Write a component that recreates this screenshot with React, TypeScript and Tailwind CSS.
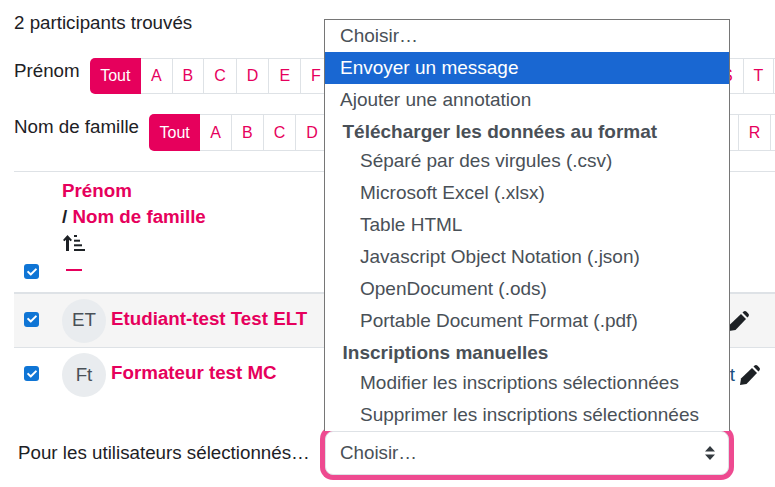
import { FaCheck } from "react-icons/fa";

const firstNameLetters = "ABCDEFGHIJKLMNOPQRST".split("");
const lastNameLetters = "ABCDEFGHIJKLMNOPQR".split("");

function Pager({ label, letters, height }: { label: string; letters: string[]; height: string }) {
  return (
    <div className="flex items-start whitespace-nowrap">
      <span className="mr-[10px] leading-[26px]">{label}</span>
      <div className={"flex items-stretch text-[16px] " + height}>
        <span className="flex items-center rounded-l-[5px] bg-[#e6005c] px-[10.5px] text-white">Tout</span>
        {letters.map((l) => (
          <span
            key={l}
            className="flex shrink-0 items-center border-y border-r border-[#dee2e6] px-[10px] text-[#e6005c]"
          >
            {l}
          </span>
        ))}
        <span className="w-[20px] shrink-0 border-y border-[#dee2e6]" />
      </div>
    </div>
  );
}

function Check() {
  return (
    <span className="flex h-[15px] w-[15px] items-center justify-center rounded-[3px] bg-[#0f75d5] text-white">
      <FaCheck className="h-[10px] w-[10px]" />
    </span>
  );
}

function Avatar({ initials }: { initials: string }) {
  return (
    <span className="flex h-[44px] w-[44px] shrink-0 items-center justify-center rounded-full bg-[#e9ecef] text-[#495057]">
      {initials}
    </span>
  );
}

function Pencil() {
  return (
    <svg viewBox="0 0 20 20" className="h-[20px] w-[20px] text-[#1d2125]" fill="currentColor" aria-hidden="true">
      <path d="M0 20l1-6.500L12 3l5 5L6.500 19z" />
      <path d="M13.500 1.600l.8-.8c1-1 2.300-1 3.300 0l1.600 1.600c1 1 1 2.300 0 3.300l-.8.8z" />
    </svg>
  );
}

function SortIcon() {
  return (
    <svg viewBox="0 0 22 16" className="h-[16px] w-[22px] text-[#1d2125]" fill="currentColor" aria-hidden="true">
      <path d="M4.500 0L0 5l1.500 1.300L3 4.700V16h3V4.700l1.500 1.600L9 5z" />
      <rect x="11" y="0" width="3" height="2" />
      <rect x="11" y="4.700" width="6" height="2" />
      <rect x="11" y="9.300" width="8" height="2" />
      <rect x="11" y="14" width="11" height="2" />
    </svg>
  );
}

const exportOptions = [
  "Séparé par des virgules (.csv)",
  "Microsoft Excel (.xlsx)",
  "Table HTML",
  "Javascript Object Notation (.json)",
  "OpenDocument (.ods)",
  "Portable Document Format (.pdf)",
];

const enrolOptions = ["Modifier les inscriptions sélectionnées", "Supprimer les inscriptions sélectionnées"];

function Option({ text, indent, active }: { text: string; indent?: boolean; active?: boolean }) {
  return (
    <div
      className={
        "h-[32px] leading-[32px] " +
        (indent ? "pl-[35px] " : "pl-[15px] ") +
        (active ? "bg-[#1967d2] text-white" : "")
      }
    >
      {text}
    </div>
  );
}

export default function App() {
  return (
    <div className="relative h-[487px] w-[775px] overflow-hidden bg-white pl-[14px] font-['Liberation_Sans',Arial,sans-serif] text-[18.75px] text-[#1d2125]">
      <div className="flex h-[48px] items-center pb-[1px] whitespace-nowrap">2 participants trouvés</div>
      <div className="mt-[10px]">
        <Pager label="Prénom" letters={firstNameLetters} height="h-[36px]" />
      </div>
      <div className="mt-[20px]">
        <Pager label="Nom de famille" letters={lastNameLetters} height="h-[37px]" />
      </div>

      <div className="mt-[20px] w-[761px] border-t border-[#dee2e6]">
        <div className="flex h-[122px] border-b-2 border-[#dee2e6]">
          <div className="flex w-[48px] items-end pb-[13px] pl-[10px]">
            <Check />
          </div>
          <div className="pt-[6px] font-bold leading-[26px] text-[#e6005c]">
            <div>Prénom</div>
            <div>
              <span className="text-[#1d2125]">/ </span>Nom de famille
            </div>
            <div className="ml-[1px] mt-[5px]">
              <SortIcon />
            </div>
            <div className="ml-[4px] mt-[18px] h-[2px] w-[16px] bg-[#e6005c]" />
          </div>
        </div>
        <div className="flex h-[54px] items-center justify-between border-b border-[#dee2e6] bg-[#f5f5f5] pr-[26px]">
          <div className="flex items-center">
            <div className="mb-[3px] w-[48px] pl-[10px]">
              <Check />
            </div>
            <Avatar initials="ET" />
            <span className="mb-[3px] ml-[5px] font-bold text-[#e6005c]">Etudiant-test Test ELT</span>
          </div>
          <Pencil />
        </div>
        <div className="flex h-[54px] items-center justify-between pr-[15px]">
          <div className="flex items-center">
            <div className="mb-[3px] w-[48px] pl-[10px]">
              <Check />
            </div>
            <Avatar initials="Ft" />
            <span className="mb-[3px] ml-[5px] font-bold text-[#e6005c]">Formateur test MC</span>
          </div>
          <div className="flex items-center gap-[5px]">
            <span className="text-[#1b4f80]">t</span>
            <Pencil />
          </div>
        </div>
      </div>

      <div className="mt-[29px] flex items-center pl-[4px] whitespace-nowrap">
        <span className="w-[307px]">Pour les utilisateurs sélectionnés…</span>
        <div className="flex h-[44px] w-[404px] items-center justify-between rounded-[8px] border border-[#dee2e6] bg-white pl-[14px] pr-[13px] text-[#495057] ring-[5px] ring-[#ee4a90]">
          <span>Choisir…</span>
          <svg viewBox="0 0 10 14" className="h-[14px] w-[10px] text-[#343a40]" fill="currentColor" aria-hidden="true">
            <path d="M5 0l5 5.500H0zM5 14L0 8.500h10z" />
          </svg>
        </div>
      </div>

      {/* open select list, lies over the page */}
      <div className="absolute left-[324px] top-[19px] h-[412px] w-[406px] whitespace-nowrap border border-b-0 border-[#767676] bg-white text-[19px] text-[#495057]">
        <Option text="Choisir…" />
        <Option text="Envoyer un message" active />
        <Option text="Ajouter une annotation" />
        <div className="h-[28.5px] pl-[17.5px] font-bold leading-[32px]">Télécharger les données au format</div>
        {exportOptions.map((o) => (
          <Option key={o} text={o} indent />
        ))}
        <div className="h-[30.5px] pl-[17.5px] font-bold leading-[32px]">Inscriptions manuelles</div>
        {enrolOptions.map((o) => (
          <Option key={o} text={o} indent />
        ))}
      </div>
    </div>
  );
}
